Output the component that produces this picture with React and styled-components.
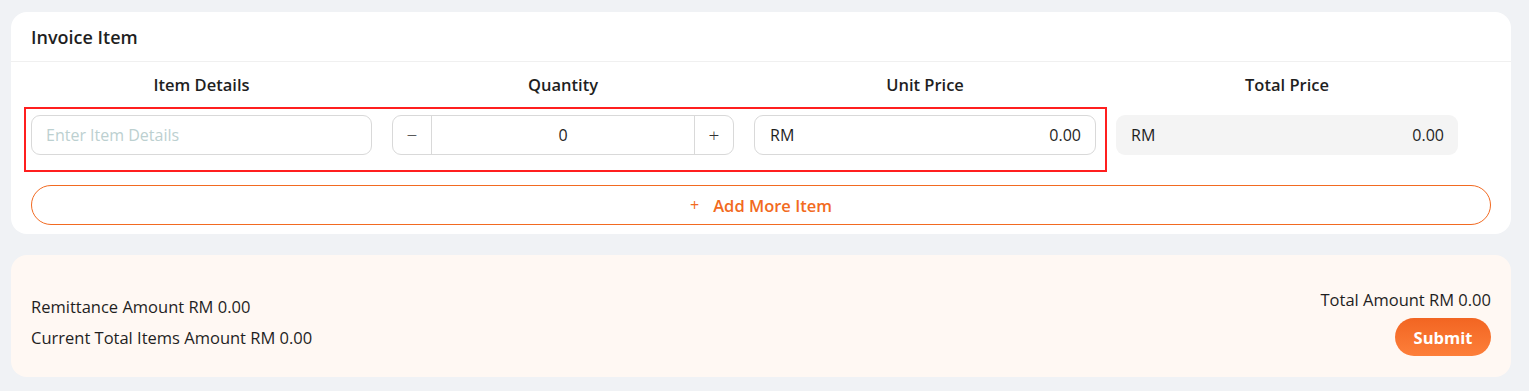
import React from "react";
import styled, { createGlobalStyle } from "styled-components";

const Global = createGlobalStyle`
  html, body { margin: 0; padding: 0; background: #f0f2f5; }
  body { font-family: "Open Sans", "Noto Sans", sans-serif; color: #1f1f1f; }
  * { box-sizing: border-box; }
`;

const Page = styled.div`
  padding: 12px 18px 14px 11px;
  display: flex;
  flex-direction: column;
  gap: 21px;
`;

const Card = styled.section`
  background: #fff;
  border-radius: 16px;
`;

const CardHeader = styled.div`
  height: 50px;
  padding: 0 20px;
  display: flex;
  align-items: center;
  border-bottom: 1px solid #f0f0f0;
  font-size: 18px;
  font-weight: 600;
`;

const CardBody = styled.div`
  padding: 10px 20px 9px 20px;
`;

const HeadRow = styled.div`
  display: grid;
  grid-template-columns: 341px 342px 342px 342px;
  column-gap: 20px;
  height: 24px;
  align-items: center;
`;

const HeadCell = styled.div`
  text-align: center;
  font-size: 16.5px;
  font-weight: 600;
`;

const ItemRow = styled.div`
  display: flex;
  align-items: flex-start;
  margin-top: 11px;
  margin-left: -7px;
`;

const Highlight = styled.div`
  display: flex;
  gap: 20px;
  border: 2px solid #ff1f1f;
  padding: 6px 9px 15px 5px;
`;

const Field = styled.div`
  width: ${(p) => p.$w || 342}px;
  height: 40px;
  border-radius: 9px;
  border: ${(p) => (p.$readonly ? "none" : "1px solid #d9d9d9")};
  background: ${(p) => (p.$readonly ? "#f4f4f4" : "#fff")};
  display: flex;
  align-items: center;
  overflow: hidden;
  font-size: 16px;
`;

const TextInput = styled.input`
  flex: 1;
  border: none;
  outline: none;
  background: transparent;
  height: 100%;
  padding: 0 14px;
  font: inherit;
  font-size: 16px;
  color: #1f1f1f;
  &::placeholder { color: #bcd0d0; }
`;

const StepButton = styled.div`
  width: 39px;
  height: 100%;
  display: flex;
  align-items: center;
  justify-content: center;
  color: #333;
  font-size: 19px;
  font-weight: 300;
  border-${(p) => p.$side}: 1px solid #d9d9d9;
`;

const QtyValue = styled.div`
  flex: 1;
  text-align: center;
`;

const Money = styled.div`
  flex: 1;
  display: flex;
  justify-content: space-between;
  padding: 0 14px 0 15px;
`;

const TotalCell = styled(Field)`
  margin-left: 9px;
  margin-top: 8px;
`;

const AddButton = styled.button`
  margin-top: 13px;
  width: 100%;
  height: 40px;
  border-radius: 20px;
  border: 1px solid #f26a21;
  background: #fff;
  color: #f26a21;
  font-family: inherit;
  font-size: 16.5px;
  font-weight: 600;
  display: flex;
  align-items: center;
  justify-content: center;
  gap: 14px;
  span.plus { font-weight: 400; font-size: 16px; }
`;

const Summary = styled.section`
  background: #fff8f3;
  border-radius: 16px;
  height: 122px;
  padding: 0 20px 21px 20px;
  display: flex;
  justify-content: space-between;
  align-items: flex-end;
`;

const Lines = styled.div`
  display: flex;
  flex-direction: column;
  gap: 8px;
  font-size: 16.5px;
  padding-bottom: 7px;
`;

const Right = styled.div`
  display: flex;
  flex-direction: column;
  align-items: flex-end;
  gap: 7px;
  font-size: 16.5px;
`;

const Submit = styled.button`
  width: 96px;
  height: 38px;
  border-radius: 19px;
  border: none;
  background: linear-gradient(180deg, #f26522, #fd7f3a);
  color: #fff;
  font-family: inherit;
  font-size: 16.5px;
  font-weight: 700;
`;

export default function App() {
  return (
    <>
      <Global />
      <Page>
        <Card>
          <CardHeader>Invoice Item</CardHeader>
          <CardBody>
            <HeadRow>
              <HeadCell>Item Details</HeadCell>
              <HeadCell>Quantity</HeadCell>
              <HeadCell>Unit Price</HeadCell>
              <HeadCell>Total Price</HeadCell>
            </HeadRow>
            <ItemRow>
              <Highlight>
                <Field $w={341}>
                  <TextInput placeholder="Enter Item Details" />
                </Field>
                <Field>
                  <StepButton $side="right">−</StepButton>
                  <QtyValue>0</QtyValue>
                  <StepButton $side="left">+</StepButton>
                </Field>
                <Field>
                  <Money>
                    <span>RM</span>
                    <span>0.00</span>
                  </Money>
                </Field>
              </Highlight>
              <TotalCell $readonly>
                <Money>
                  <span>RM</span>
                  <span>0.00</span>
                </Money>
              </TotalCell>
            </ItemRow>
            <AddButton>
              <span className="plus">+</span>
              <span>Add More Item</span>
            </AddButton>
          </CardBody>
        </Card>
        <Summary>
          <Lines>
            <div>Remittance Amount RM 0.00</div>
            <div>Current Total Items Amount RM 0.00</div>
          </Lines>
          <Right>
            <div>Total Amount RM 0.00</div>
            <Submit>Submit</Submit>
          </Right>
        </Summary>
      </Page>
    </>
  );
}
